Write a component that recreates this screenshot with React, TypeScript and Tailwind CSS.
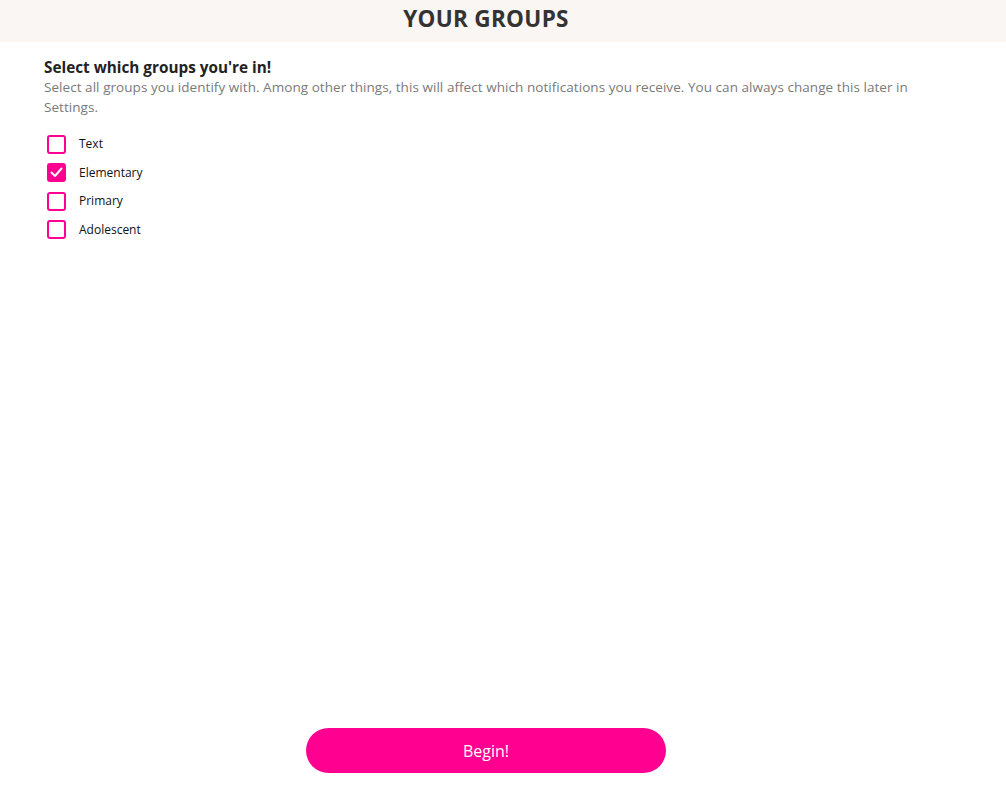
import React, { useState } from 'react'

const groups = ['Text', 'Elementary', 'Primary', 'Adolescent']

const font = { fontFamily: '"Open Sans", "Noto Sans", sans-serif' }

export default function App() {
  const [selected, setSelected] = useState<string[]>(['Elementary'])

  const toggle = (g: string) =>
    setSelected((s) => (s.includes(g) ? s.filter((x) => x !== g) : [...s, g]))

  return (
    <div className="min-h-screen flex flex-col bg-white" style={font}>
      <header className="h-[42px] bg-[#f9f6f3] flex items-center">
        <h1 className="w-[972px] text-center text-[22.5px] leading-[30px] pb-[4px] font-bold text-[#333333] tracking-[0.3px]">
          YOUR GROUPS
        </h1>
      </header>

      <main className="w-[972px] px-[44px] pt-[15px] flex-1">
        <h2 className="text-[15.3px] font-bold text-[#222222] leading-[20px]">
          Select which groups you're in!
        </h2>
        <p className="text-[13.5px] text-[#7a7a7a] leading-[20px] tracking-[0.05px]">
          Select all groups you identify with. Among other things, this will affect which
          notifications you receive. You can always change this later in Settings.
        </p>

        <ul className="mt-[13px] flex flex-col">
          {groups.map((g) => {
            const on = selected.includes(g)
            return (
              <li
                key={g}
                className="h-[28.5px] flex items-center cursor-pointer"
                onClick={() => toggle(g)}
              >
                <span
                  className={
                    on
                      ? 'ml-[3px] w-[19px] h-[19px] rounded-[3px] border-2 border-[#ff0090] bg-[#ff0090] flex items-center justify-center'
                      : 'ml-[3px] w-[19px] h-[19px] rounded-[3px] border-2 border-[#ff0090] bg-white'
                  }
                >
                  {on && (
                    <svg width="13" height="11" viewBox="0 0 13 11" fill="none">
                      <path
                        d="M1.5 5.5 L5 9 L11.5 1.5"
                        stroke="white"
                        strokeWidth="2"
                        strokeLinecap="round"
                        strokeLinejoin="round"
                      />
                    </svg>
                  )}
                </span>
                <span className="ml-[13px] text-[12px] text-[#111111]">{g}</span>
              </li>
            )
          })}
        </ul>
      </main>

      <div className="w-[972px] flex justify-center pb-[30px]">
        <button className="w-[360px] h-[45px] rounded-full bg-[#ff0090] text-white text-[16px]">
          Begin!
        </button>
      </div>
    </div>
  )
}
